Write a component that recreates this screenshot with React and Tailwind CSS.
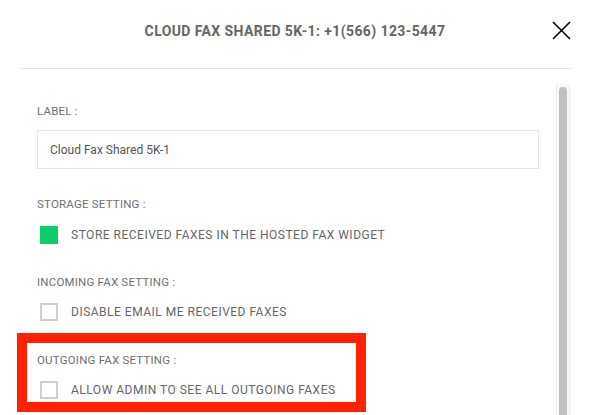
import React, { useState } from 'react';

const font = { fontFamily: 'Roboto, "Liberation Sans", sans-serif' };

function Checkbox({ checked }) {
  if (checked) {
    return <span className="block w-[18px] h-[18px] bg-[#0ccb6a] shrink-0" />;
  }
  return <span className="block w-[18px] h-[18px] border-2 border-[#cfcfcf] bg-white shrink-0" />;
}

function Section({ title, label, checked, className = '', rowClass = 'mt-[14px]' }) {
  return (
    <div className={className}>
      <div className="text-[11.5px] leading-[14px] text-[#6f6f6f] tracking-[0.2px]">{title}</div>
      <div className={`flex items-center gap-[13px] ml-[3px] ${rowClass}`}>
        <Checkbox checked={checked} />
        <span className="text-[12px] leading-[14px] text-[#666] tracking-[0.5px]">{label}</span>
      </div>
    </div>
  );
}

export default function App() {
  const [label] = useState('Cloud Fax Shared 5K-1');

  return (
    <div className="relative w-[590px] h-[415px] overflow-hidden bg-white" style={font}>
      {/* Header */}
      <header className="relative h-[68px] flex items-center justify-center">
        <h1 className="text-[14px] font-bold text-[#666] tracking-[0.4px] -mt-[6px]">
          CLOUD FAX SHARED 5K-1: +1(566) 123-5447
        </h1>
        <button className="absolute right-[19px] top-[21px] w-[19px] h-[19px] text-black">
          <svg viewBox="0 0 19 19" className="w-[19px] h-[19px]" fill="none" stroke="currentColor" strokeWidth="1.6">
            <path d="M1 1 L18 18 M18 1 L1 18" />
          </svg>
        </button>
      </header>
      <div className="ml-[20px] mr-[19px] h-px bg-[#e3e3e3]" />

      {/* Body */}
      <div className="flex">
        <div className="flex-1 pl-[37px] pr-[17px] pt-[35px]">
          <div className="text-[11.5px] leading-[14px] text-[#6f6f6f] tracking-[0.2px]">LABEL :</div>
          <div className="mt-[12px] h-[39px] border border-[#e3e3e3] flex items-center px-[12px]">
            <span className="text-[12px] text-[#555]">{label}</span>
          </div>

          <Section className="mt-[28px]" rowClass="mt-[15px]" title="STORAGE SETTING :" label="STORE RECEIVED FAXES IN THE HOSTED FAX WIDGET" checked />
          <Section className="mt-[31px]" title="INCOMING FAX SETTING :" label="DISABLE EMAIL ME RECEIVED FAXES" />
          <Section className="mt-[32px]" title="OUTGOING FAX SETTING :" label="ALLOW ADMIN TO SEE ALL OUTGOING FAXES" />
        </div>

        {/* Scrollbar */}
        <div className="mt-[15px] mr-[20px] w-[14px] h-[400px] border-x border-[#ececec] bg-[#fafafa] flex justify-center pt-[3px]">
          <div className="w-[8px] h-full bg-[#c1c1c1] rounded-t-[4px]" />
        </div>
      </div>

      {/* Highlight annotation */}
      <div className="absolute left-[17px] top-[333px] w-[349px] h-[79px] border-[10px] border-[#ff2200] pointer-events-none" />
    </div>
  );
}
